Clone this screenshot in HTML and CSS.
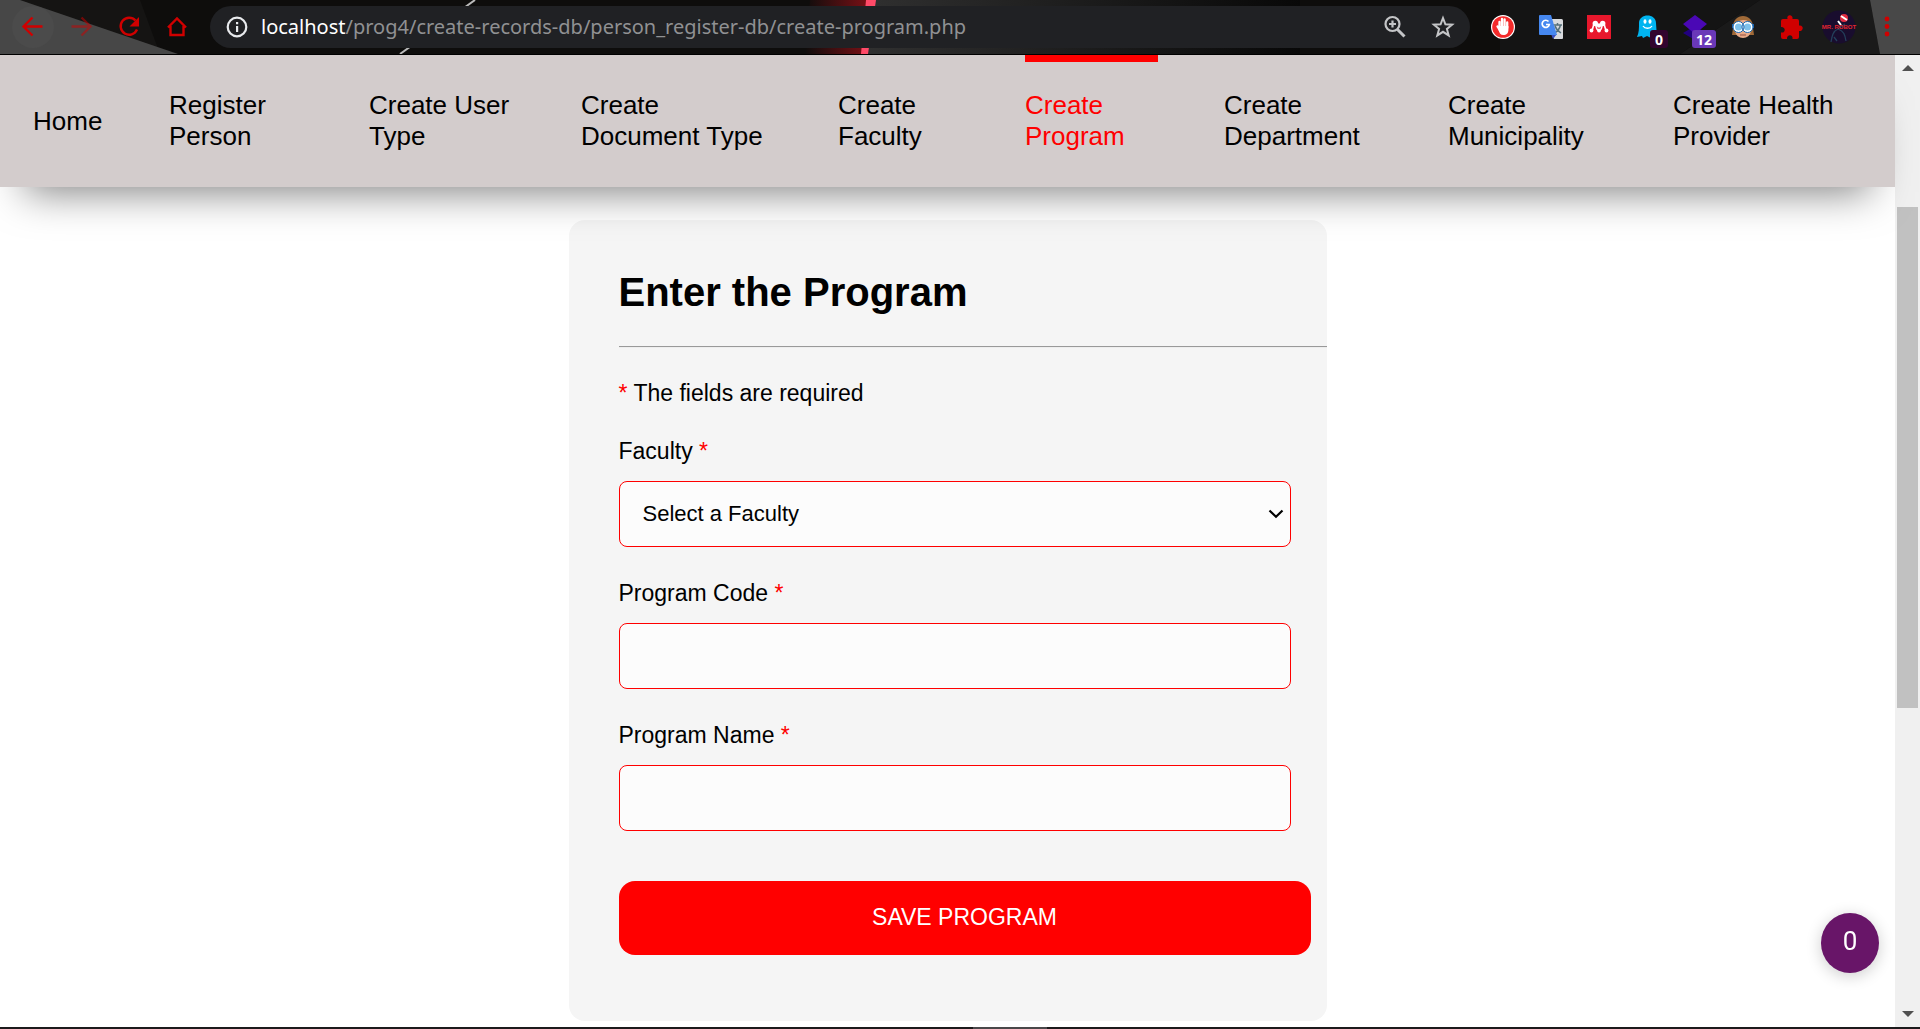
FILE: index.html
```html
<!DOCTYPE html>
<html lang="en">
<head>
<meta charset="utf-8">
<meta name="viewport" content="width=device-width, initial-scale=1">
<title>Create Program</title>
<link rel="stylesheet" href="styles.css">
</head>
<body>
<header class="toolbar">
  <svg class="toolbar-art" viewBox="0 0 1920 54" preserveAspectRatio="none" aria-hidden="true">
    <defs>
      <linearGradient id="glow"><stop offset="0" stop-color="#7a1015" stop-opacity="0"/><stop offset="1" stop-color="#7a1015"/></linearGradient>
      <linearGradient id="slab"><stop offset="0" stop-color="#303030"/><stop offset="1" stop-color="#080808"/></linearGradient>
    </defs>
    <path fill="#151413" d="M20 0H140L160 54H0V0z"/>
    <path fill="#474747" d="M0 0H20L178 54H0z"/>
    <path stroke="#bbb" stroke-width="2" d="M475 0 400 54"/>
    <path fill="url(#glow)" d="M810 0H868L862 54H805z"/>
    <path fill="url(#slab)" d="M870 0H1300V54H864z"/>
    <path fill="#ff4a68" d="M866 0H876L868 54H861z"/>
    <path fill="#1a1a1a" d="M1760 0H1870L1880 54H1680z"/>
    <path fill="#141414" d="M1500 0H1760L1680 54H1500z"/>
    <path fill="#484848" d="M1870 0H1920V54H1880z"/>
  </svg>
  <button class="tool tool-back" aria-label="Back"><svg width="42" height="42" viewBox="0 0 42 42"><path class="line" d="M30.500 20.500H12M20.500 11.500l-9 9 9 9"/></svg></button>
  <button class="tool tool-dim" aria-label="Forward"><svg width="42" height="42" viewBox="0 0 42 42"><path class="line" d="M11.500 20.500H30M21.500 11.500l9 9-9 9"/></svg></button>
  <button class="tool" aria-label="Reload"><svg width="42" height="42" viewBox="0 0 42 42"><path class="line" d="M27.500 14.500a8.500 8.500 0 1 0 1.500 9"/><path fill="#d00000" d="M31 11v9.500h-9.500z"/></svg></button>
  <button class="tool" aria-label="Home"><svg width="42" height="42" viewBox="0 0 42 42"><path class="line" d="M12 21.500l9-9 9 9M14.500 20v9h13v-9"/></svg></button>

  <div class="address">
    <svg class="info" width="22" height="22" viewBox="0 0 22 22" aria-hidden="true"><circle cx="11" cy="11" r="9.300" fill="none" stroke="#e8eaed" stroke-width="2.200"/><path fill="#e8eaed" d="M10 10h2.200v6H10zM10 6h2.200v2.300H10z"/></svg>
    <div class="url"><span class="host">localhost</span>/prog4/create-records-db/person_register-db/create-program.php</div>
    <button class="tool" aria-label="Zoom"><svg width="42" height="42" viewBox="0 0 42 42"><g fill="none" stroke="#c4c5c7" stroke-width="2.200"><circle cx="18.500" cy="18" r="7"/><path d="M18.500 14.500v7M15 18h7"/><path stroke-width="3" d="M23.500 23.500l7 7"/></g></svg></button>
    <button class="tool" aria-label="Bookmark"><svg width="42" height="42" viewBox="0 0 42 42"><path fill="none" stroke="#c4c5c7" stroke-width="2" d="M21 12l2.400 6.300 6.700.4-5.200 4.200 1.800 6.500-5.700-3.600-5.700 3.600 1.800-6.500-5.200-4.200 6.700-.4z"/></svg></button>
  </div>

  <button class="tool" aria-label="Ad blocker"><svg width="42" height="42" viewBox="0 0 42 42"><circle cx="21" cy="21" r="12" fill="#fff"/><circle cx="21" cy="21" r="10.800" fill="#f42b2b"/><g fill="none" stroke="#fff" stroke-width="2.300" stroke-linecap="round"><path d="M17.500 23v-7M20 21v-8M22.600 21v-7.500M25.200 22v-5.500M15.500 20.500l2.500 4"/></g><path fill="#fff" d="M16.500 20h9.900v4c0 3-2 5-5 5s-4-2-4.900-5z"/></svg></button>
  <button class="tool" aria-label="Translate"><svg width="42" height="42" viewBox="0 0 42 42"><path fill="#d8dadd" d="M16 13h15.500q1.500 0 1.500 1.500V32q0 1-1 1H24z"/><path fill="none" stroke="#55707a" stroke-width="1.500" d="M23 19h9M27.500 17v2M30.500 19c-1 4-4 7-6 8M25 20c1 3 3 5 6 7"/><path fill="#3a50c0" d="M21 28h6l-4 5z"/><path fill="#4688f0" d="M10 9h11l6 20H10q-1 0-1-1V10q0-1 1-1z"/><path fill="none" stroke="#fff" stroke-width="1.700" d="M18.500 15.500a3.600 3.600 0 1 0 .8 3H16"/></svg></button>
  <button class="tool" aria-label="Reference manager"><svg width="42" height="42" viewBox="0 0 42 42"><path fill="#e8172c" d="M9 9h24v24H9z"/><g fill="#fff"><circle cx="17.300" cy="17.500" r="2.700"/><circle cx="24.700" cy="17.500" r="2.700"/><circle cx="21" cy="19.500" r="2.200"/><circle cx="13.500" cy="24.500" r="1.900"/><circle cx="21" cy="24.500" r="1.900"/><circle cx="28.500" cy="24.500" r="1.900"/></g><path fill="none" stroke="#fff" stroke-width="1.600" d="M13.500 24.500c2-1 1-5 3-7M28.500 24.500c-2-1-1-5-3-7M18 19c0 3 1 5 3 5.500 2-.5 3-2.500 3-5.500"/></svg></button>
  <button class="tool" aria-label="Tracker blocker"><svg width="42" height="42" viewBox="0 0 42 42"><path fill="#00b4f0" d="M13 17c0-10 17-10 17 0l1 15-3-2-3 2-4-2-4 2-1-2-5 1c2-4 2-9 2-14z"/><g fill="#fff"><ellipse cx="19" cy="15.500" rx="1.500" ry="2.200"/><ellipse cx="24" cy="15.500" rx="1.500" ry="2.200"/></g><path fill="none" stroke="#fff" stroke-width="1.300" d="M17 20c2 3 7 3 9 0"/></svg><span class="count count-dark">0</span></button>
  <button class="tool" aria-label="Layers"><svg width="42" height="42" viewBox="0 0 42 42"><path fill="#210080" d="M9 27l12-7 12 7-12 7z"/><path fill="#4a08b5" d="M9 18l12-9 12 9-12 10z"/></svg><span class="count count-violet">12</span></button>
  <button class="tool" aria-label="Goggles"><svg width="42" height="42" viewBox="0 0 42 42"><path fill="#a06a38" d="M11 22c-1-16 21-16 20 0l1 7H10z"/><path fill="#e8a987" d="M13 19c2-4 6-5 9-5 3 0 6 2 7 5v5c0 5-4 8-8 8s-8-3-8-8z"/><path stroke="#1c5fa8" stroke-width="4" d="M10 20h22"/><g fill="#7ec1ea" stroke="#fff" stroke-width="2"><circle cx="16.500" cy="21" r="4.500"/><circle cx="25.500" cy="21" r="4.500"/></g><g fill="none" stroke="#1767b2"><circle cx="16.500" cy="21" r="5.500"/><circle cx="25.500" cy="21" r="5.500"/></g><path stroke="#934f42" d="M18 29h6"/></svg></button>
  <button class="tool" aria-label="Extensions"><svg width="42" height="42" viewBox="0 0 42 42"><path fill="#d00000" d="M11 15q0-2 2-2h4.500c-1.500-5 6-5 5 0H27q2 0 2 2v4.500c5-1 5 6 0 5.500v6q0 2-2 2h-4.500c1-5-6-5-5.500 0h-4q-2 0-2-2v-4.500c5 1 5-6 0-5.500z"/></svg></button>
  <button class="tool" aria-label="Profile"><svg width="42" height="42" viewBox="0 0 42 42"><circle cx="21" cy="21" r="16.500" fill="#190d2e"/><path fill="none" stroke="#24405b" stroke-width="1.300" d="M13 36c1-6 2-11 7-13 6 2 7 6 8 12M16 31l3 4M20 23l7-5"/><circle cx="26" cy="12" r="4" fill="#e32b40"/><path stroke="#fff" stroke-width="2" d="M23 10l6 4M20 15l3 4"/><text x="21" y="23" class="avatar-name">MR. ROBOT</text></svg></button>
  <button class="tool" aria-label="Menu"><svg width="42" height="42" viewBox="0 0 42 42"><g fill="#d00000"><circle cx="21" cy="13" r="2.400"/><circle cx="21" cy="20.500" r="2.400"/><circle cx="21" cy="28" r="2.400"/></g></svg></button>
</header>

<div class="viewport">
  <div class="page">
    <nav class="menu" aria-label="Main">
      <a href="#">Home</a>
      <a href="#">Register Person</a>
      <a href="#">Create User Type</a>
      <a href="#">Create Document Type</a>
      <a href="#">Create Faculty</a>
      <a href="#" class="active" aria-current="page">Create Program</a>
      <a href="#">Create Department</a>
      <a href="#">Create Municipality</a>
      <a href="#">Create Health Provider</a>
    </nav>
    <main>
      <form class="card">
        <h1>Enter the Program</h1>
        <hr>
        <p class="note"><span class="star">*</span> The fields are required</p>
        <div class="field">
          <label for="faculty">Faculty <span class="star">*</span></label>
          <div class="select-box">
            <select id="faculty"><option>Select a Faculty</option></select>
            <svg class="chevron" width="16" height="10" viewBox="0 0 16 10" aria-hidden="true"><path fill="none" stroke="#000" stroke-width="2.200" d="M1.500 1.500 8 7.800l6.500-6.300"/></svg>
          </div>
        </div>
        <div class="field">
          <label for="code">Program Code <span class="star">*</span></label>
          <input id="code" type="text">
        </div>
        <div class="field">
          <label for="name">Program Name <span class="star">*</span></label>
          <input id="name" type="text">
        </div>
        <button class="save" type="submit">SAVE PROGRAM</button>
      </form>
    </main>
    <button class="counter" type="button">0</button>
  </div>
  <div class="scrollbar" aria-hidden="true">
    <svg width="12" height="6" viewBox="0 0 12 6"><path fill="#505050" d="M0 6 6 0l6 6z"/></svg>
    <div class="track"><div class="thumb"></div></div>
    <svg width="12" height="6" viewBox="0 0 12 6"><path fill="#505050" d="M0 0h12L6 6z"/></svg>
  </div>
</div>
<footer class="taskbar"></footer>
</body>
</html>
```
FILE: styles.css
```css
* { box-sizing: border-box; }

body {
  margin: 0;
  min-height: 100vh;
  display: flex;
  flex-direction: column;
  background: #fff;
  color: #000;
  font-family: "Liberation Sans", Arial, sans-serif;
}

button, input, select { font-family: inherit; }

/* Browser toolbar */
.toolbar {
  position: relative;
  display: flex;
  align-items: center;
  height: 55px;
  padding: 0 9px;
  background: #0e0d0c;
  border-bottom: 1px solid #000;
}

.toolbar-art {
  position: absolute;
  inset: 0;
  width: 100%;
  height: 100%;
}

.tool {
  position: relative;
  flex: none;
  width: 48px;
  height: 42px;
  padding: 0 3px;
  border: 0;
  background: none;
}

.tool svg { display: block; }
.tool .line { fill: none; stroke: #d00000; stroke-width: 2.400; }
.tool-back svg { border-radius: 50%; background: #4b4b4b; }
.tool-dim { opacity: 0.5; }

.count {
  position: absolute;
  top: 24px;
  height: 18px;
  border-radius: 3px;
  color: #fff;
  font: bold 14px/20px "Open Sans", sans-serif;
  text-align: center;
}

.count-dark { left: 27px; width: 18px; background: #32052f; }
.count-violet { left: 21px; width: 24px; background: #6a38b8; }

.avatar-name {
  fill: #e3262e;
  font: bold 6px "Liberation Sans", sans-serif;
  text-anchor: middle;
}

.address {
  position: relative;
  flex: 1;
  min-width: 0;
  display: flex;
  align-items: center;
  height: 42px;
  margin: 0 9px;
  padding: 0 3px 0 16px;
  border-radius: 21px;
  background: #202124;
}

.info { flex: none; }

.url {
  flex: 1;
  min-width: 0;
  margin-left: 13px;
  overflow: hidden;
  white-space: nowrap;
  color: #909193;
  font: 20px/28px "Noto Sans", sans-serif;
}

.host { color: #fff; }

/* Page and its scrollbar */
.viewport { flex: 1; display: flex; }
.page { flex: 1; min-width: 0; }

.menu {
  position: relative;
  z-index: 1;
  display: grid;
  grid-template-columns: 70fr 134fr 146fr 191fr 121fr 133fr 158fr 159fr 189fr;
  column-gap: 66px;
  height: 132px;
  padding: 0 33px;
  background: #d3cccc;
  box-shadow: 0 30px 40px -25px rgba(0, 0, 0, 0.5);
}

.menu a {
  display: flex;
  align-items: center;
  min-width: 0;
  border-top: 7px solid transparent;
  border-bottom: 7px solid transparent;
  color: #000;
  font-size: 26px;
  line-height: 31px;
  text-decoration: none;
}

.menu a.active { border-top-color: #f00; color: #f00; }

main { padding: 33px 0 4px; }

.card {
  width: 40%;
  margin: 0 auto;
  padding: 50px 0 66px 50px;
  border-radius: 16px;
  background: #f5f5f5;
  font-size: 23px;
  line-height: 26px;
}

h1 { margin: 0; font-size: 40px; line-height: 44px; }

hr {
  height: 2px;
  margin: 32px 0;
  border: 0;
  border-top: 1px solid #999;
  border-bottom: 1px solid #eee;
}

.note { margin: 0 0 32px; }
.star { color: #f00; }
.field { width: 95%; margin-bottom: 33px; }
.field label { display: block; margin-bottom: 17px; }

.field input, .field select {
  display: block;
  width: 100%;
  height: 66px;
  padding: 0 23px;
  border: 1px solid #f00;
  border-radius: 8px;
  background: #fcfcfc;
  color: #000;
  font-size: 22px;
  appearance: none;
}

.field select { padding-bottom: 2px; }
.select-box { position: relative; }

.chevron {
  position: absolute;
  top: 28px;
  right: 7px;
  pointer-events: none;
}

.save {
  display: block;
  width: calc(100% - 16px);
  height: 74px;
  margin-top: 50px;
  padding: 0 0 2px;
  border: 0;
  border-radius: 16px;
  background: #f00;
  color: #fff;
  font-size: 23px;
}

.counter {
  position: fixed;
  right: 41px;
  bottom: 56px;
  width: 58px;
  height: 60px;
  padding: 0 0 4px;
  border: 0;
  border-radius: 50%;
  background: #681568;
  box-shadow: 0 3px 16px rgba(0, 0, 0, 0.2);
  color: #fff;
  font: 26px/30px Roboto, sans-serif;
}

.scrollbar {
  flex: none;
  display: flex;
  flex-direction: column;
  align-items: center;
  width: 25px;
  padding: 10px 0;
  background: #f0f0f0;
}

.track { flex: 1; width: 21px; padding-top: 136px; }
.thumb { height: 62.3%; background: #c1c1c1; }

.taskbar {
  height: 2px;
  background: linear-gradient(90deg, #1c1a1c 0 973px, #4a484a 973px 1047px, #1c1a1c 1047px);
}
```
